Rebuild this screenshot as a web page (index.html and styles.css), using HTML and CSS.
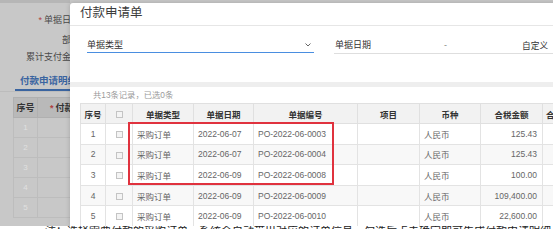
FILE: index.html
```html
<!DOCTYPE html>
<html>
<head>
<meta charset="utf-8">
<link rel="stylesheet" href="styles.css">
</head>
<body>
<div class="screen">
  <div class="page">
    <div class="page-top"></div>
    <div class="page-form">
      <div class="f-row r1"><span class="req">*</span>单据日期</div>
      <div class="f-row r2">部门</div>
      <div class="f-row r3">累计支付金额</div>
    </div>
    <div class="tabs"><span class="tab">付款申请明细</span></div>
    <table class="bg-table">
      <colgroup><col class="bc1"><col class="bc2"></colgroup>
      <thead><tr><th>序号</th><th class="left"><span class="req">*</span>付款类型</th></tr></thead>
      <tbody>
        <tr><td>1</td><td></td></tr>
        <tr><td>2</td><td></td></tr>
        <tr><td>3</td><td></td></tr>
        <tr><td>4</td><td></td></tr>
        <tr><td>5</td><td></td></tr>
      </tbody>
    </table>
  </div>

  <div class="modal">
    <div class="modal-head">付款申请单</div>
    <div class="search">
      <div class="field f-type">
        <span class="f-label">单据类型</span>
        <svg class="chev" width="6" height="4" viewBox="0 0 6 4"><path d="M0.5 0.5 L3 3 L5.5 0.5" fill="none" stroke="#666" stroke-width="1"/></svg>
      </div>
      <div class="field f-date">
        <span class="f-label">单据日期</span>
        <span class="dash">-</span>
        <span class="custom">自定义</span>
      </div>
    </div>
    <div class="band"></div>
    <div class="list">
      <div class="count">共13条记录，已选0条</div>
      <div class="grid-wrap">
        <table class="grid">
          <colgroup>
            <col class="c1"><col class="c2"><col class="c3"><col class="c4"><col class="c5"><col class="c6"><col class="c7"><col class="c8"><col class="c9">
          </colgroup>
          <thead>
            <tr><th>序号</th><th><span class="cb"></span></th><th>单据类型</th><th>单据日期</th><th>单据编号</th><th>项目</th><th>币种</th><th>合税金额</th><th class="left">合计金额(本币)</th></tr>
          </thead>
          <tbody>
            <tr><td class="ctr">1</td><td class="ctr"><span class="cb"></span></td><td>采购订单</td><td>2022-06-07</td><td>PO-2022-06-0003</td><td></td><td>人民币</td><td class="num">125.43</td><td></td></tr>
            <tr class="alt"><td class="ctr">2</td><td class="ctr"><span class="cb"></span></td><td>采购订单</td><td>2022-06-07</td><td>PO-2022-06-0004</td><td></td><td>人民币</td><td class="num">125.43</td><td></td></tr>
            <tr><td class="ctr">3</td><td class="ctr"><span class="cb"></span></td><td>采购订单</td><td>2022-06-09</td><td>PO-2022-06-0008</td><td></td><td>人民币</td><td class="num">100.00</td><td></td></tr>
            <tr class="alt"><td class="ctr">4</td><td class="ctr"><span class="cb"></span></td><td>采购订单</td><td>2022-06-09</td><td>PO-2022-06-0009</td><td></td><td>人民币</td><td class="num">109,400.00</td><td></td></tr>
            <tr><td class="ctr">5</td><td class="ctr"><span class="cb"></span></td><td>采购订单</td><td>2022-06-09</td><td>PO-2022-06-0010</td><td></td><td>人民币</td><td class="num">22,600.00</td><td></td></tr>
          </tbody>
        </table>
        <div class="highlight"></div>
      </div>
    </div>
  </div>
</div>
<div class="caption"><span>注：选择需要付款的采购订单，系统会自动带出对应的订单信息，勾选后点击确定即可生成付款申请明细</span></div>
</body>
</html>
```

FILE: styles.css
```css
* { box-sizing: border-box; }
html, body { margin: 0; padding: 0; }
body {
  width: 553px;
  height: 229px;
  overflow: hidden;
  background: #ffffff;
  font-family: "Liberation Sans", "Noto Sans CJK SC", sans-serif;
}
.screen {
  position: relative;
  height: 226px;
  overflow: hidden;
  background: #c8c8c8;
}

/* ---------- dimmed page behind ---------- */
.page {
  width: 70px;
  height: 226px;
  overflow: hidden;
}
.page-top { height: 3px; background: #b6b6b6; width: 553px; }
.page-form { margin-top: 11px; width: 80px; }
.f-row {
  height: 12px;
  line-height: 12px;
  font-size: 9px;
  color: #4a4a4a;
  text-align: right;
  white-space: nowrap;
}
.r2 { margin-top: 8px; }
.r3 { margin-top: 5px; }
.req { color: #b04040; margin-right: 2px; }
.tabs {
  margin-top: 7px;
  padding-left: 15px;
  border-bottom: 1px solid #bcbcbc;
  width: 100px;
}
.tab {
  display: inline-block;
  padding: 0 5px 2px;
  font-size: 9.5px;
  line-height: 12px;
  font-weight: bold;
  color: #3a64a0;
  border-bottom: 2px solid #3a64a0;
  width: 80px;
  white-space: nowrap;
}
.bg-table {
  margin: 5px 0 0 13px;
  border-collapse: collapse;
  table-layout: fixed;
  width: 140px;
}
.bc1 { width: 24px; }
.bc2 { width: 116px; }
.bg-table th {
  height: 20px;
  background: #b9b9b9;
  border: 1px solid #b0b0b0;
  font-size: 9px;
  color: #333;
  font-weight: bold;
  text-align: center;
  padding: 0;
  white-space: nowrap;
}
.bg-table th.left { text-align: left; padding-left: 12px; }
.bg-table td {
  height: 20px;
  border: 1px solid #bdbdbd;
  font-size: 8px;
  color: #e0e0e0;
  text-align: center;
  padding: 0;
}

/* ---------- modal ---------- */
.modal {
  position: absolute;
  left: 70px;
  top: 3px;
  width: 500px;
  height: 223px;
  background: #fff;
  border-radius: 3px 0 0 0;
  box-shadow: 0 0 5px rgba(0,0,0,0.18);
}
.modal-head {
  height: 23px;
  padding-left: 10px;
  line-height: 21px;
  font-size: 12.5px;
  color: #3c3c3c;
  border-bottom: 1px solid #e6e6e6;
}
.search {
  display: flex;
  padding: 10px 0 29px 17px;
  height: 56px;
}
.field {
  position: relative;
  display: flex;
  align-items: center;
  height: 17px;
  font-size: 9px;
  color: #333;
  white-space: nowrap;
}
.f-type {
  width: 231px;
  border-bottom: 1.5px solid #4a8ee0;
}
.chev { position: absolute; right: 3px; top: 7px; }
.f-date {
  margin-left: 20px;
  width: 240px;
  padding-left: 1px;
  border-bottom: 1px solid #dedede;
  height: 18px;
}
.dash { margin-left: 73px; color: #888; }
.custom { margin-left: 75px; font-size: 8.7px; color: #333; padding-top: 2px; }
.band { height: 5px; background: #eeeeee; }
.list { padding: 0 0 0 10px; }
.count {
  height: 16px;
  line-height: 16px;
  padding-left: 13px;
  font-size: 8.3px;
  color: #9a9a9a;
}
.grid-wrap { position: relative; }
.grid {
  border-collapse: collapse;
  table-layout: fixed;
  width: 522px;
  font-size: 8.5px;
}
.c1 { width: 25px; }
.c2 { width: 27px; }
.c3 { width: 61px; }
.c4 { width: 60px; }
.c5 { width: 104px; }
.c6 { width: 62px; }
.c7 { width: 61px; }
.c8 { width: 62px; }
.c9 { width: 60px; }
.grid th {
  height: 20px;
  padding: 0;
  background: #f2f2f2;
  border: 1px solid #e0e0e0;
  font-weight: bold;
  color: #333;
  text-align: center;
  white-space: nowrap;
  overflow: hidden;
}
.grid th.left { text-align: left; padding-left: 3px; }
.grid td {
  height: 20.6px;
  padding: 0 0 0 4px;
  border: 1px solid #e3e3e3;
  color: #666;
  white-space: nowrap;
  overflow: hidden;
}
.grid tr.alt td { background: #f8f8f8; }
.grid td.ctr { text-align: center; padding: 0; }
.grid td.num { text-align: right; padding: 0 5px 0 0; }
.cb {
  display: inline-block;
  width: 7px;
  height: 7px;
  border: 1px solid #c4c4c4;
  background: #f4f4f4;
  vertical-align: middle;
}
.highlight {
  position: absolute;
  left: 48px;
  top: 19px;
  width: 206px;
  height: 63px;
  border: 2px solid #e0323e;
}

/* ---------- caption strip ---------- */
.caption {
  height: 3px;
  overflow: hidden;
  padding-left: 45px;
  background: #fff;
  white-space: nowrap;
}
.caption span {
  display: block;
  margin-top: -1px;
  font-size: 11px;
  line-height: 12px;
  color: #222;
}
```
